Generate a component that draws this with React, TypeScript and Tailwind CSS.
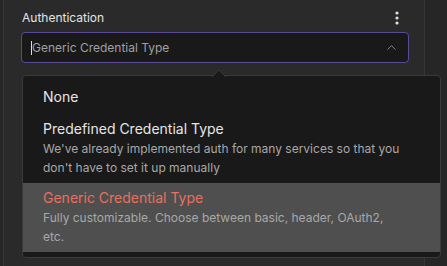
import { ChevronUp } from 'lucide-react'

const font = { fontFamily: 'Inter, "Noto Sans", sans-serif' }

function Option({
  title,
  desc,
  active,
}: {
  title: string
  desc?: string
  active?: boolean
}) {
  return (
    <div className={`px-5 pt-[4px] pb-[6px] ${active ? 'bg-[#4f4f4f]' : ''}`}>
      <div
        className={`text-[14px] leading-[22px] ${active ? 'text-[#e8705f]' : 'text-[#e6e6e6]'}`}
      >
        {title}
      </div>
      {desc && (
        <div className="max-w-[362px] text-[12px] leading-[18.5px] text-[#a8a8a8]">{desc}</div>
      )}
    </div>
  )
}

export default function App() {
  return (
    <div className="w-[447px] h-[266px] flex bg-[#262626] overflow-hidden relative" style={font}>
      {/* node settings panel */}
      <div className="ml-[3px] w-[422px] h-full bg-[#2a2a2a] border-l border-r border-[#363636] pl-[17px] pr-[15px] pt-[9px]">
        <div className="flex items-center justify-between h-[18px]">
          <span className="text-[12px] text-[#e4e4e4] pl-[1px]">Authentication</span>
          <svg width="4" height="14" viewBox="0 0 4 14" className="mr-[10px]">
            <circle cx="2" cy="2" r="1.6" fill="#e0e0e0" />
            <circle cx="2" cy="7" r="1.6" fill="#e0e0e0" />
            <circle cx="2" cy="12" r="1.6" fill="#e0e0e0" />
          </svg>
        </div>
        <div className="mt-[5px] h-[31px] w-[388px] rounded-[4px] border border-[#5b4a9a] bg-[#191919] flex items-center pl-[9px] pr-[9px]">
          <span className="w-px h-[14px] bg-[#e0e0e0]" />
          <span className="text-[12px] text-[#a0a0a0] flex-1">Generic Credential Type</span>
          <ChevronUp size={15} strokeWidth={1.5} className="text-[#8a8a8a]" />
        </div>
      </div>

      {/* dropdown popover */}
      <div className="absolute left-[22px] top-[75px] w-[419px] h-[183px] rounded-[4px] border border-[#3a3a3a] bg-[#191919] pt-[6px]">
        <svg
          width="14"
          height="8"
          viewBox="0 0 14 8"
          className="absolute left-[189px] top-[-7px]"
        >
          <path d="M0 8 L7 1 L14 8" fill="#191919" stroke="#3a3a3a" strokeWidth="1" />
        </svg>
        <Option title="None" />
        <Option
          title="Predefined Credential Type"
          desc="We've already implemented auth for many services so that you don't have to set it up manually"
        />
        <Option
          title="Generic Credential Type"
          desc="Fully customizable. Choose between basic, header, OAuth2, etc."
          active
        />
      </div>
    </div>
  )
}
